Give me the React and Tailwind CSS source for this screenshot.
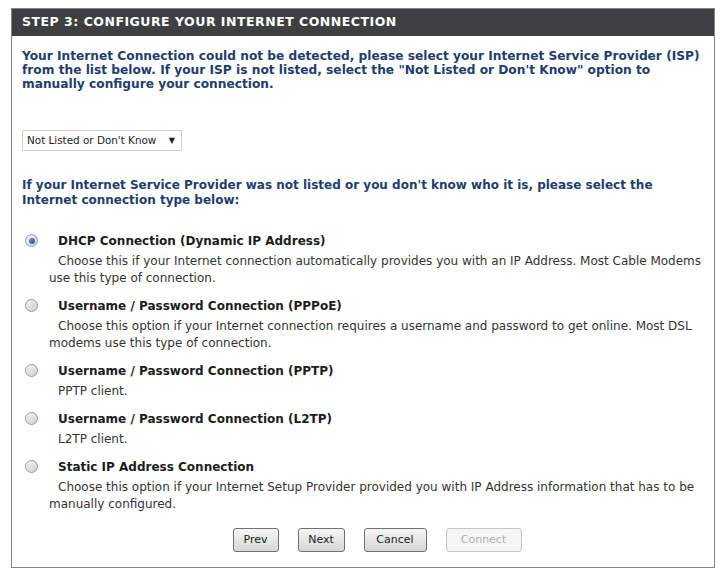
// Router setup wizard, step 3: pick the Internet connection type.
const BOLD = "font-['DejaVu_Sans',Verdana,sans-serif] font-bold";
const BODY = "font-['DejaVu_Sans',Tahoma,sans-serif]";

const OPTIONS = [
  {
    title: 'DHCP Connection (Dynamic IP Address)',
    lines: [
      'Choose this if your Internet connection automatically provides you with an IP Address. Most Cable Modems',
      'use this type of connection.',
    ],
    checked: true,
  },
  {
    title: 'Username / Password Connection (PPPoE)',
    lines: [
      'Choose this option if your Internet connection requires a username and password to get online. Most DSL',
      'modems use this type of connection.',
    ],
  },
  { title: 'Username / Password Connection (PPTP)', lines: ['PPTP client.'] },
  { title: 'Username / Password Connection (L2TP)', lines: ['L2TP client.'] },
  {
    title: 'Static IP Address Connection',
    lines: [
      'Choose this option if your Internet Setup Provider provided you with IP Address information that has to be',
      'manually configured.',
    ],
  },
];

function Radio({ checked }) {
  return (
    <span className="w-[13px] h-[13px] rounded-full border border-[#9a9a9a] bg-gradient-to-br from-[#f4f4f4] to-[#cfcfcf] flex items-center justify-center">
      {checked && <span className="w-[6px] h-[6px] rounded-full bg-gradient-to-br from-[#6f9ad6] to-[#1f4f8f]" />}
    </span>
  );
}

function Button({ label, width, disabled }) {
  return (
    <button
      type="button"
      className={
        'h-[24px] rounded-[3px] border text-[11px] ' + BODY + ' ' +
        (disabled
          ? 'border-[#c4c4c4] bg-[#f5f5f5] text-[#b0b0b0]'
          : 'border-[#707070] bg-gradient-to-b from-[#f6f6f6] to-[#d6d6d6] text-[#222]')
      }
      style={{ width }}
    >
      {label}
    </button>
  );
}

export default function App() {
  return (
    <div className="bg-white w-[720px] h-[571px] pt-[8px] pl-[11px]">
      <div className="w-[704px] border border-[#858585]">
        <div className={'h-[27px] bg-[#3d3f41] text-white text-[12.5px] tracking-[0.5px] pl-[10px] flex items-center ' + BOLD}>
          STEP 3: CONFIGURE YOUR INTERNET CONNECTION
        </div>

        <div className="px-[10px] pb-[15px]">
          <div className={'mt-[13px] text-[12.2px] leading-[14px] text-[#233d6b] ' + BOLD}>
            <div className="whitespace-nowrap">Your Internet Connection could not be detected, please select your Internet Service Provider (ISP)</div>
            <div className="whitespace-nowrap">from the list below. If your ISP is not listed, select the "Not Listed or Don't Know" option to</div>
            <div className="whitespace-nowrap">manually configure your connection.</div>
          </div>

          <div className={'mt-[39px] w-[160px] h-[21px] border border-[#cfcfcf] bg-white flex items-center justify-between pl-[4px] pr-[6px] text-[10.4px] text-[#222] ' + BODY}>
            <span>Not Listed or Don't Know</span>
            <span className="text-[8px] text-[#222]">▼</span>
          </div>

          <div className={'mt-[27px] text-[12px] leading-[14.5px] text-[#233d6b] ' + BOLD}>
            <div className="whitespace-nowrap">If your Internet Service Provider was not listed or you don't know who it is, please select the</div>
            <div className="whitespace-nowrap">Internet connection type below:</div>
          </div>

          <div className="mt-[25px] flex flex-col gap-[10px]">
            {OPTIONS.map((opt) => (
              <div key={opt.title}>
                <div className="flex items-center h-[17px]">
                  <div className="w-[36px] pl-[3px] flex">
                    <Radio checked={opt.checked} />
                  </div>
                  <span className={'text-[12px] text-[#1c1c1c] whitespace-nowrap ' + BOLD}>{opt.title}</span>
                </div>
                <div className={'mt-[4px] pl-[27px] text-[12px] leading-[17px] text-[#333] ' + BODY}>
                  {opt.lines.map((line, i) => (
                    <div key={i} className={i === 0 ? 'pl-[9px] whitespace-nowrap' : 'whitespace-nowrap'}>
                      {line}
                    </div>
                  ))}
                </div>
              </div>
            ))}
          </div>

          <div className="mt-[15px] flex justify-center gap-[19px] pl-[28px]">
            <Button label="Prev" width={46} />
            <Button label="Next" width={47} />
            <Button label="Cancel" width={63} />
            <Button label="Connect" width={76} disabled />
          </div>
        </div>
      </div>
    </div>
  );
}
